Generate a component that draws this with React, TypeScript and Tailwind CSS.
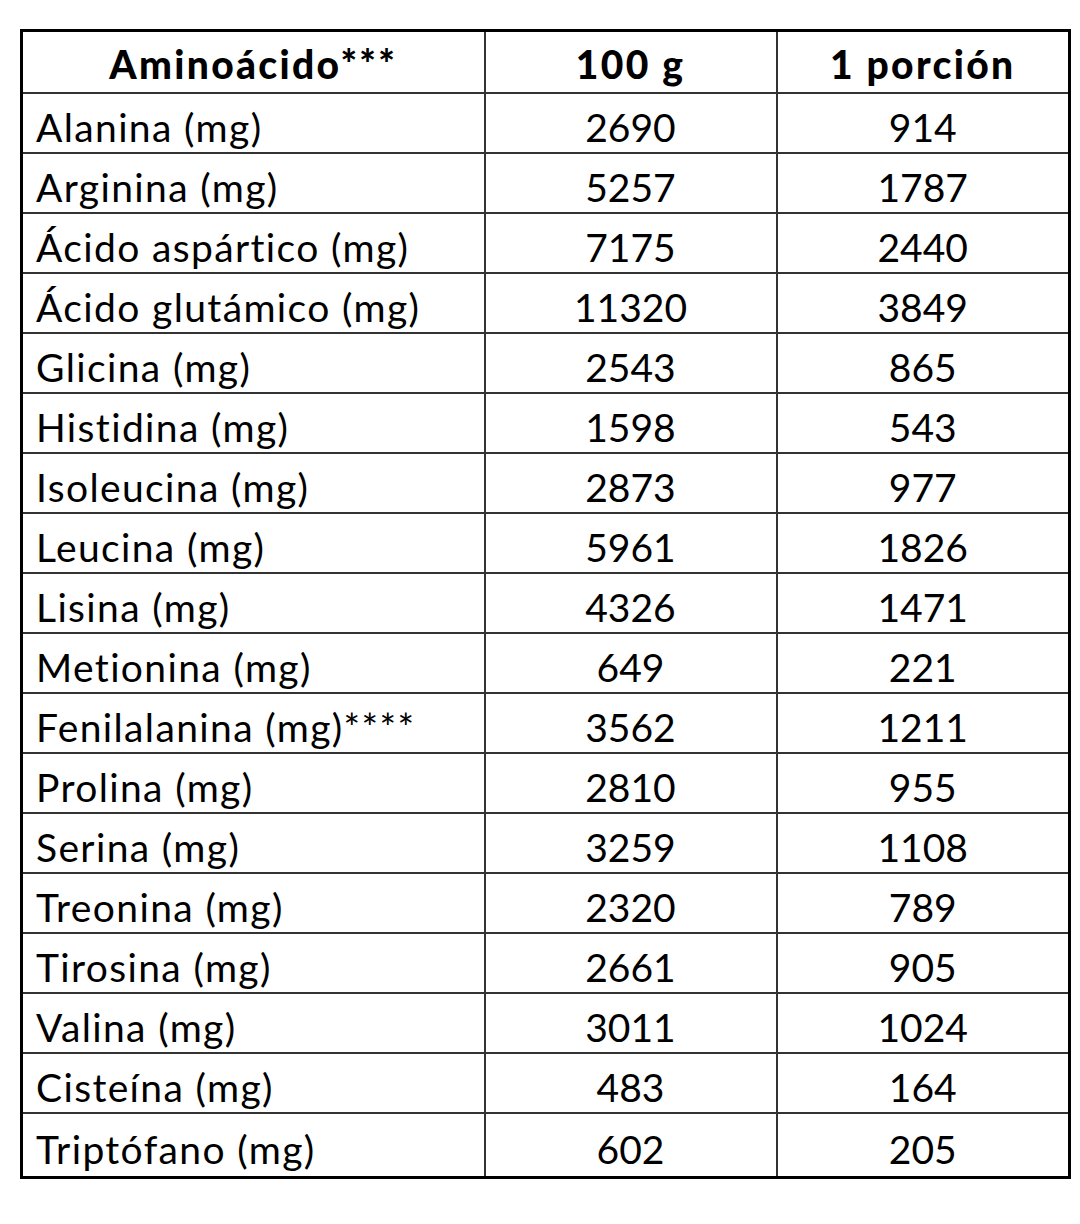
const rows: [string, string, string][] = [
  ['Alanina (mg)', '2690', '914'],
  ['Arginina (mg)', '5257', '1787'],
  ['Ácido aspártico (mg)', '7175', '2440'],
  ['Ácido glutámico (mg)', '11320', '3849'],
  ['Glicina (mg)', '2543', '865'],
  ['Histidina (mg)', '1598', '543'],
  ['Isoleucina (mg)', '2873', '977'],
  ['Leucina (mg)', '5961', '1826'],
  ['Lisina (mg)', '4326', '1471'],
  ['Metionina (mg)', '649', '221'],
  ['Fenilalanina (mg)****', '3562', '1211'],
  ['Prolina (mg)', '2810', '955'],
  ['Serina (mg)', '3259', '1108'],
  ['Treonina (mg)', '2320', '789'],
  ['Tirosina (mg)', '2661', '905'],
  ['Valina (mg)', '3011', '1024'],
  ['Cisteína (mg)', '483', '164'],
  ['Triptófano (mg)', '602', '205'],
]

export default function App() {
  return (
    <div className="w-[1080px] h-[1224px] bg-white pt-[29px] pl-[20px] font-['Lato',sans-serif] text-black [font-variant-ligatures:none]">
      <table className="w-[1048px] table-fixed border-collapse border-[3px] border-black">
        <colgroup>
          <col className="w-[463px]" />
          <col className="w-[292px]" />
          <col className="w-[293px]" />
        </colgroup>
        <thead>
          <tr className="h-[62px]">
            <th className="border-2 border-[#333] text-center text-[39px] font-black tracking-[0.06em] pt-[6px] leading-none">Aminoácido***</th>
            <th className="border-2 border-[#333] text-center text-[39px] font-black tracking-[0.06em] pt-[6px] leading-none">100 g</th>
            <th className="border-2 border-[#333] text-center text-[39px] font-black tracking-[0.06em] pt-[6px] leading-none">1 porción</th>
          </tr>
        </thead>
        <tbody>
          {rows.map(([name, a, b], i) => (
            <tr key={name} className={i === rows.length - 1 ? 'h-[65px]' : 'h-[60px]'}>
              <td className="border-2 border-[#333] pl-[13px] pt-[10px] text-[39px] tracking-[0.035em] leading-none whitespace-nowrap">{name}</td>
              <td className="border-2 border-[#333] text-center pt-[10px] text-[39px] leading-none">{a}</td>
              <td className="border-2 border-[#333] text-center pt-[10px] text-[39px] leading-none">{b}</td>
            </tr>
          ))}
        </tbody>
      </table>
    </div>
  )
}
